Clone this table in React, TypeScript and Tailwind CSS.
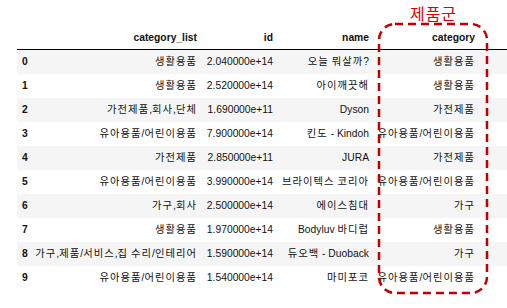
const rows = [
  ["0", "생활용품", "2.040000e+14", "오늘 뭐살까?", "생활용품"],
  ["1", "생활용품", "2.520000e+14", "아이깨끗해", "생활용품"],
  ["2", "가전제품,회사,단체", "1.690000e+11", "Dyson", "가전제품"],
  ["3", "유아용품/어린이용품", "7.900000e+14", "킨도 - Kindoh", "유아용품/어린이용품"],
  ["4", "가전제품", "2.850000e+11", "JURA", "가전제품"],
  ["5", "유아용품/어린이용품", "3.990000e+14", "브라이텍스 코리아", "유아용품/어린이용품"],
  ["6", "가구,회사", "2.500000e+14", "에이스침대", "가구"],
  ["7", "생활용품", "1.970000e+14", "Bodyluv 바디럽", "생활용품"],
  ["8", "가구,제품/서비스,집 수리/인테리어", "1.590000e+14", "듀오백 - Duoback", "가구"],
  ["9", "유아용품/어린이용품", "1.540000e+14", "마미포코", "유아용품/어린이용품"],
];

const headers = ["", "category_list", "id", "name", "category"];
const cols = "grid grid-cols-[15px_170px_76px_96px_106px]";

// hangul runs get a little extra spacing so they take the width of the old gulim font
function Cell({ text }: { text: string }) {
  const parts = text.split(/([가-힣]+)/);
  return (
    <>
      {parts.map((p, i) =>
        /[가-힣]/.test(p) ? (
          <span key={i} className="tracking-[1.05px]">
            {p}
          </span>
        ) : (
          p
        )
      )}
    </>
  );
}

export default function App() {
  return (
    <div className="relative w-[507px] h-[308px] bg-white text-[#111] text-[10.3px] font-['Liberation_Sans','Noto_Sans_CJK_KR',sans-serif]">
      <div className="pl-[17px] pt-[27px] flex flex-col">
        <div className={`${cols} h-[23px] items-center border-b border-black font-bold`}>
          {headers.map((h, i) => (
            <div key={i} className="text-right pr-[5px] whitespace-nowrap">
              {h}
            </div>
          ))}
        </div>
        {rows.map((r, ri) => (
          <div
            key={ri}
            className={`${cols} h-[24px] items-center ${ri % 2 === 0 ? "bg-[#f5f5f5]" : "bg-white"}`}
          >
            {r.map((c, ci) => (
              <div
                key={ci}
                className={
                  ci === 0
                    ? "pl-[5px] font-bold"
                    : "text-right pr-[5px] whitespace-nowrap"
                }
              >
                <Cell text={c} />
              </div>
            ))}
          </div>
        ))}
      </div>

      <div className="absolute left-[379px] top-[3px] w-[108px] text-center text-[16px] text-[#e00000] font-['Noto_Sans_CJK_KR',sans-serif] leading-[20px] tracking-[1px] pl-[1px]">
        제품군
      </div>
      <svg
        className="absolute left-[377px] top-[22px] pointer-events-none"
        width="112"
        height="274"
        viewBox="0 0 112 274"
      >
        <rect
          x="2"
          y="2"
          width="108"
          height="269"
          rx="16"
          fill="none"
          stroke="#c00000"
          strokeWidth="2.5"
          strokeDasharray="8 5"
        />
      </svg>
    </div>
  );
}
